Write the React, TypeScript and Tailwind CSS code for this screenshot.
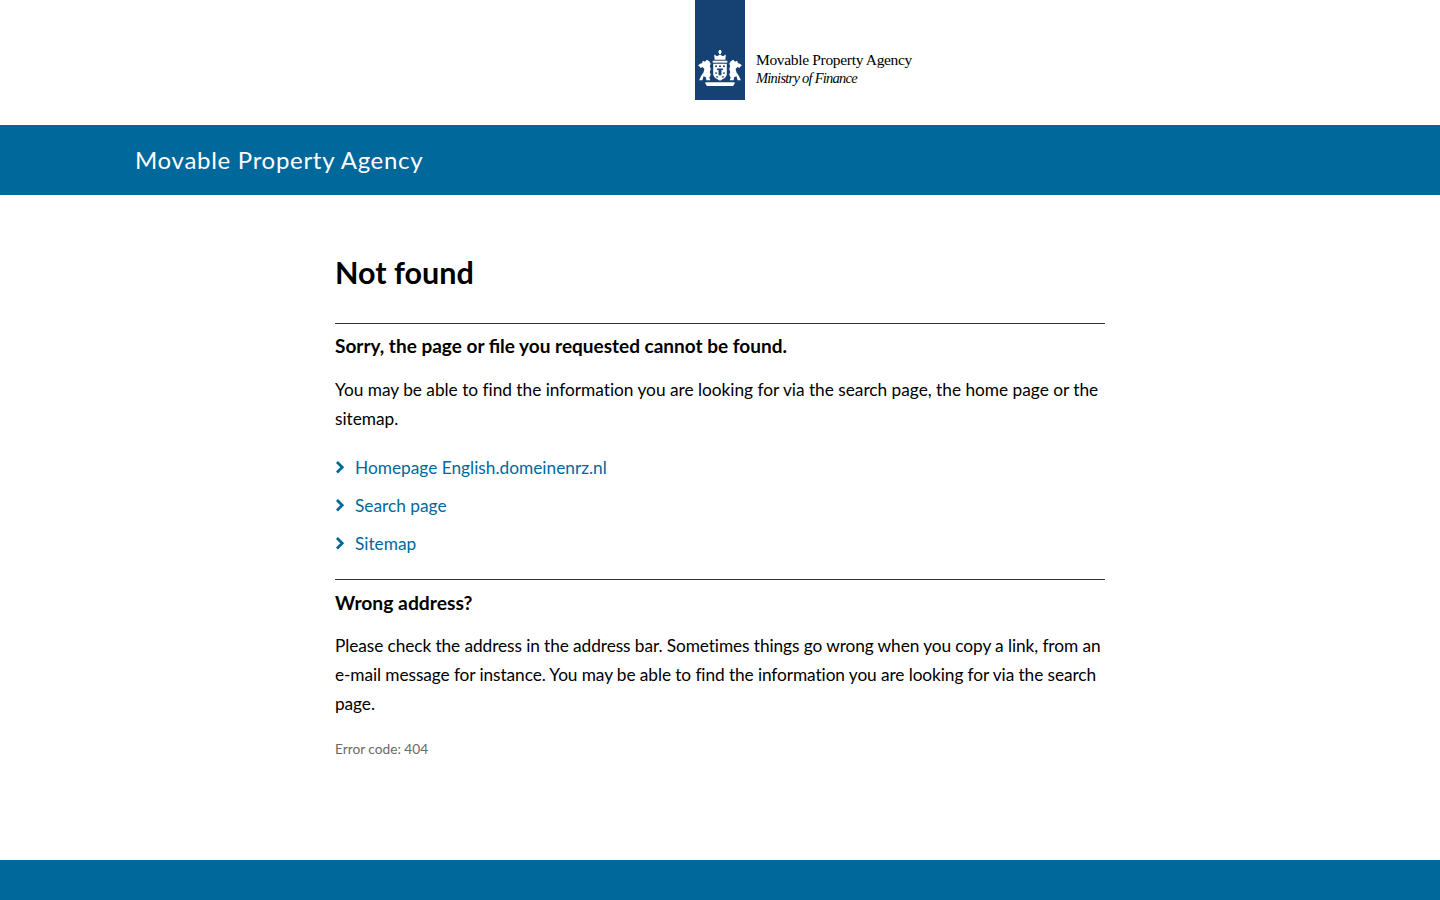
import React from "react";

const Crest = () => (
  <svg width="46" height="37" viewBox="0 0 46 38" fill="#fff" aria-hidden="true">
    <path d="M22 0h2v1.500h1v1h-1V4h-2V2.500h-1v-1h1zM17 4.500l3 2 3-2 3 2 3-2-.5 5.500h-11z" />
    <path d="M15.500 11h15v2h-15z" />
    <path d="M16 14h14v10.500c0 3.500-3.500 5.500-7 7-3.500-1.500-7-3.500-7-7z" />
    <path fill="#154273" d="M18 16h2v1.500h-2zM22 16h2v1.500h-2zM26 16h2v1.500h-2zM20 19h6v1.500h-1.500V26h-3v-5.500H20zM18 23h2v1.500h-2zM26 23h2v1.500h-2zM19 27h2v1.200h-2zM25 27h2v1.200h-2z" />
    <path d="M0.500 16l2-2 2-.5 1-2.500 2 1 2-2 2.500 1.500 1.500 2.500-1 2.500 1 3-1 3 1 3-1.500 3 1 2.500H9l-.5-3-2.500-1-1 4H1.500L4 26l2-3 1-3.500-2-2-2 1-1-1.500z" />
    <path d="M45.500 16l-2-2-2-.5-1-2.500-2 1-2-2-2.500 1.500-1.500 2.500 1 2.500-1 3 1 3-1 3 1.500 3-1 2.500H37l.5-3 2.500-1 1 4h3.500L42 26l-2-3-1-3.500 2-2 2 1 1-1.500z" />
    <path d="M8 33h30v1.500l-1.500 2.500h-27L8 34.500z" />
  </svg>
);

const Chevron = () => (
  <svg width="10" height="14" viewBox="0 0 10 14" fill="none" stroke="#01689b" strokeWidth="2.8" aria-hidden="true">
    <path d="M2 1l5.200 5.200L2 11.400" />
  </svg>
);

const links = ["Homepage English.domeinenrz.nl", "Search page", "Sitemap"];

export default function App() {
  return (
    <div className="flex min-h-[900px] flex-col bg-white text-[17.300px] leading-[29px] text-black [font-family:'Lato',sans-serif]">
      <header className="flex h-[125px] pl-[695px]">
        <div className="flex h-[100px] items-start">
          <div className="flex h-[100px] w-[50px] shrink-0 items-end justify-center bg-[#154273] pb-[13px]">
            <Crest />
          </div>
          <div className="ml-[11px] pt-[51px] [font-family:'Liberation_Serif',serif] text-[15.500px] leading-[18px]">
            <div className="tracking-[-0.33px]">Movable Property Agency</div>
            <div className="text-[14.500px] italic tracking-[-0.75px]">Ministry of Finance</div>
          </div>
        </div>
      </header>
      <div className="flex h-[70px] items-center bg-[#01689b] pb-[2px] pl-[135px] text-[24px] tracking-[0.7px] text-white">
        Movable Property Agency
      </div>
      <main className="mx-auto w-[770px] pt-[57px]">
        <h1 className="text-[30.500px] font-bold leading-[40px]">Not found</h1>
        <section className="mt-[31px] border-t border-[#333]">
          <h2 className="mt-[7px] text-[19px] font-bold leading-[29px]">Sorry, the page or file you requested cannot be found.</h2>
          <p className="mt-[15px] tracking-[-0.015px]">You may be able to find the information you are looking for via the search page, the home page or the sitemap.</p>
          <ul className="mt-[20px] flex flex-col gap-[9px]">
            {links.map((l) => (
              <li key={l} className="flex items-center gap-[10px] text-[#01689b]">
                <Chevron />
                <a href="#">{l}</a>
              </li>
            ))}
          </ul>
        </section>
        <section className="mt-[21px] border-t border-[#333]">
          <h2 className="mt-[8px] text-[19.300px] font-bold leading-[29px]">Wrong address?</h2>
          <p className="mt-[14px] tracking-[-0.09px]">Please check the address in the address bar. Sometimes things go wrong when you copy a link, from an e-mail message for instance. You may be able to find the information you are looking for via the search page.</p>
          <p className="mt-[21px] text-[13.700px] leading-[20px] text-[#696969]">Error code: 404</p>
        </section>
      </main>
      <footer className="mt-auto h-[40px] bg-[#01689b]" />
    </div>
  );
}
